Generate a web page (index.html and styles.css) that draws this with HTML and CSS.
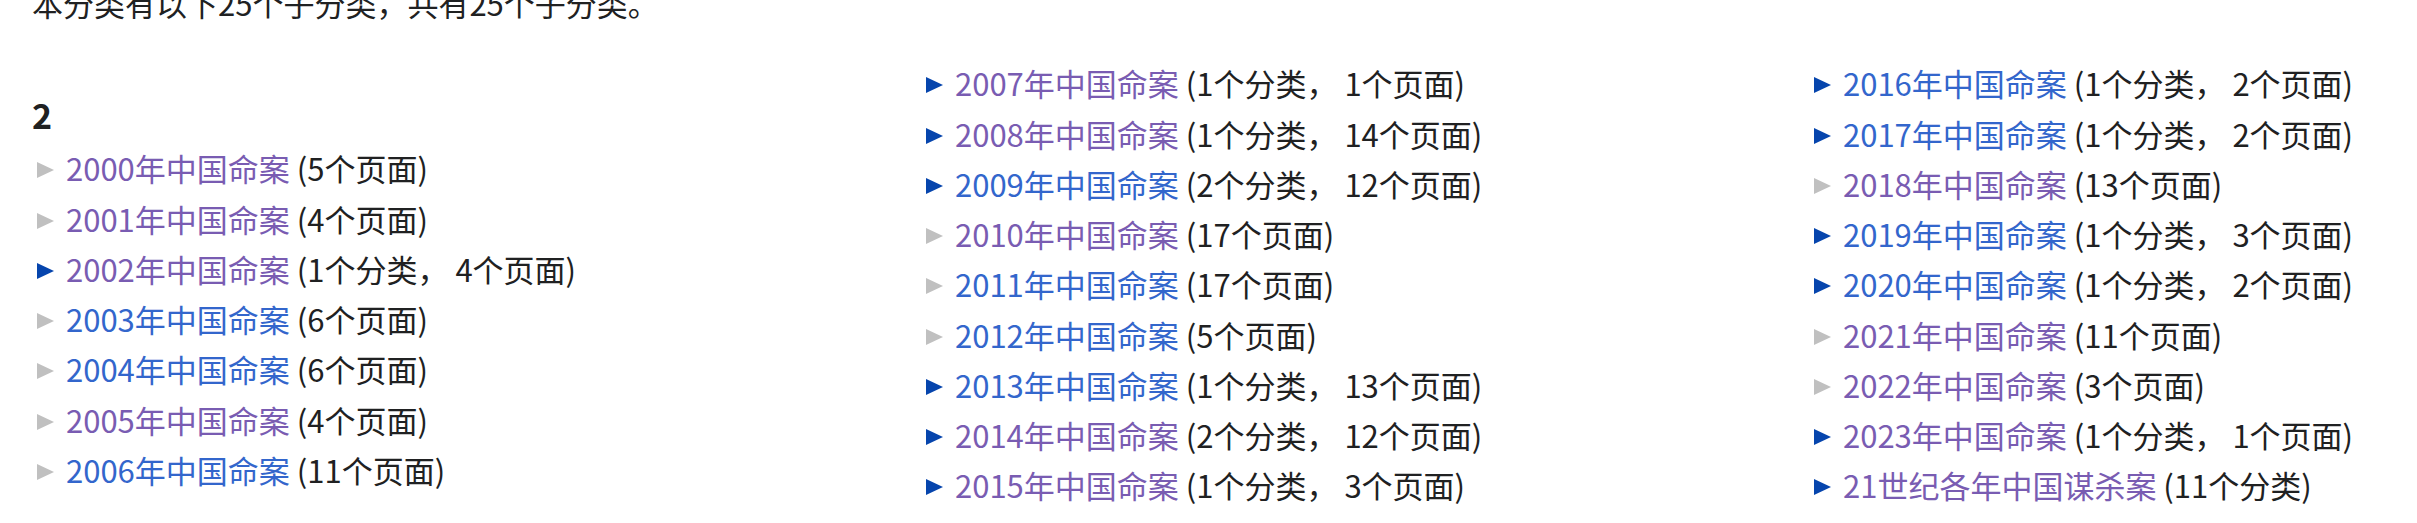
FILE: index.html
```html
<!DOCTYPE html>
<html lang="zh-CN">
<head>
    <meta charset="UTF-8">
    <meta name="viewport" content="width=device-width, initial-scale=1.0">
    <title>分类：21世纪中国命案</title>
    <link rel="stylesheet" href="styles.css">
</head>
<body>
    <div class="page">
        <p class="intro">本分类有以下25个子分类，共有25个子分类。</p>

        <!-- subcategory tree, split in three columns -->
        <div class="subcats">
            <div class="col">
                <h3>2</h3>
                <ul>
                    <li><span class="toggle empty"></span><a class="seen" href="#">2000年中国命案</a> (5个页面)</li>
                    <li><span class="toggle empty"></span><a class="seen" href="#">2001年中国命案</a> (4个页面)</li>
                    <li><span class="toggle"></span><a class="seen" href="#">2002年中国命案</a> (1个分类， 4个页面)</li>
                    <li><span class="toggle empty"></span><a href="#">2003年中国命案</a> (6个页面)</li>
                    <li><span class="toggle empty"></span><a href="#">2004年中国命案</a> (6个页面)</li>
                    <li><span class="toggle empty"></span><a class="seen" href="#">2005年中国命案</a> (4个页面)</li>
                    <li><span class="toggle empty"></span><a href="#">2006年中国命案</a> (11个页面)</li>
                </ul>
            </div>
            <div class="col">
                <ul>
                    <li><span class="toggle"></span><a class="seen" href="#">2007年中国命案</a> (1个分类， 1个页面)</li>
                    <li><span class="toggle"></span><a class="seen" href="#">2008年中国命案</a> (1个分类， 14个页面)</li>
                    <li><span class="toggle"></span><a href="#">2009年中国命案</a> (2个分类， 12个页面)</li>
                    <li><span class="toggle empty"></span><a class="seen" href="#">2010年中国命案</a> (17个页面)</li>
                    <li><span class="toggle empty"></span><a href="#">2011年中国命案</a> (17个页面)</li>
                    <li><span class="toggle empty"></span><a href="#">2012年中国命案</a> (5个页面)</li>
                    <li><span class="toggle"></span><a href="#">2013年中国命案</a> (1个分类， 13个页面)</li>
                    <li><span class="toggle"></span><a class="seen" href="#">2014年中国命案</a> (2个分类， 12个页面)</li>
                    <li><span class="toggle"></span><a class="seen" href="#">2015年中国命案</a> (1个分类， 3个页面)</li>
                </ul>
            </div>
            <div class="col">
                <ul>
                    <li><span class="toggle"></span><a href="#">2016年中国命案</a> (1个分类， 2个页面)</li>
                    <li><span class="toggle"></span><a href="#">2017年中国命案</a> (1个分类， 2个页面)</li>
                    <li><span class="toggle empty"></span><a class="seen" href="#">2018年中国命案</a> (13个页面)</li>
                    <li><span class="toggle"></span><a href="#">2019年中国命案</a> (1个分类， 3个页面)</li>
                    <li><span class="toggle"></span><a href="#">2020年中国命案</a> (1个分类， 2个页面)</li>
                    <li><span class="toggle empty"></span><a class="seen" href="#">2021年中国命案</a> (11个页面)</li>
                    <li><span class="toggle empty"></span><a class="seen" href="#">2022年中国命案</a> (3个页面)</li>
                    <li><span class="toggle"></span><a class="seen" href="#">2023年中国命案</a> (1个分类， 1个页面)</li>
                    <li><span class="toggle"></span><a class="seen" href="#">21世纪各年中国谋杀案</a> (11个分类)</li>
                </ul>
            </div>
        </div>
    </div>
</body>
</html>
```

FILE: styles.css
```css
body {
    margin: 0;
    font-family: "Noto Sans CJK SC", "Noto Sans", sans-serif;
    font-size: 31px;
    line-height: 50.25px;
    color: #202122;
    background: #fff;
    overflow: hidden;
}
.page {
    padding-left: 32px;
}
.intro {
    margin: -22px 0 0;
}
.subcats {
    display: grid;
    grid-template-columns: 889px 888px 1fr;
    margin-top: 30px;
}
.subcats h3 {
    font-size: 34px;
    line-height: 54px;
    font-weight: bold;
    margin: 30px 0 1px;
}
.subcats ul {
    list-style: none;
    margin: 0;
    padding: 0;
}
.subcats li {
    padding-left: 5px;
    white-space: nowrap;
}
/* expand arrow; grey when the category has no subcategories */
.toggle {
    display: inline-block;
    width: 0;
    height: 0;
    border-left: 17px solid #0645ad;
    border-top: 8px solid transparent;
    border-bottom: 8px solid transparent;
    margin-right: 12px;
    vertical-align: 3px;
}
.toggle.empty {
    border-left-color: #c0c0c0;
}
a {
    color: #3366cc;
    text-decoration: none;
}
a.seen {
    color: #795cb2;
}
```
